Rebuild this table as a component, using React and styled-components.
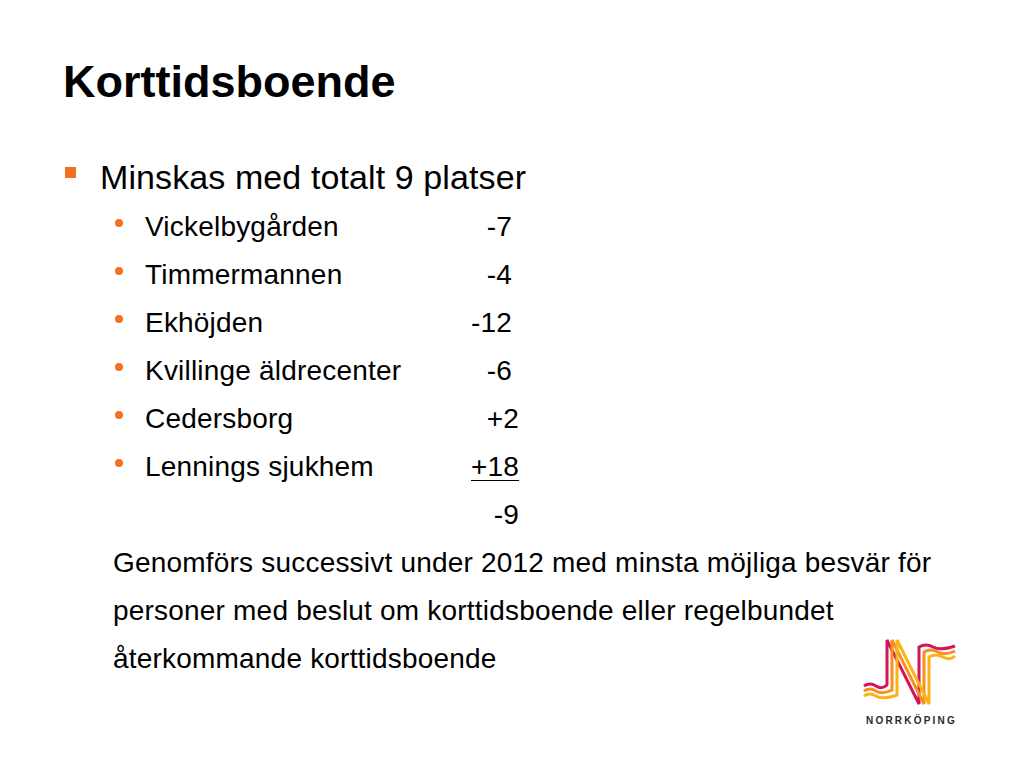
import styled, { createGlobalStyle } from "styled-components";

const GlobalStyle = createGlobalStyle`
  html, body {
    margin: 0;
    padding: 0;
    background: #ffffff;
  }
  body {
    font-family: "Liberation Sans", Arial, Helvetica, sans-serif;
    color: #000000;
  }
`;

const ORANGE = "#f36f21";

const Slide = styled.div`
  position: relative;
  width: 1024px;
  height: 768px;
  overflow: hidden;
  background: #ffffff;
  padding: 59px 0 0 63px;
  box-sizing: border-box;
`;

const Title = styled.h1`
  margin: 0;
  font-size: 45px;
  line-height: 45px;
  font-weight: bold;
`;

const Main = styled.div`
  margin-top: 49px;
  display: flex;
  align-items: flex-start;
  font-size: 34px;
  line-height: 48px;
  height: 50px;
  letter-spacing: 0.1px;
`;

const Square = styled.span`
  width: 11px;
  height: 11px;
  margin-top: 14px;
  margin-left: 2px;
  margin-right: 24px;
  background: ${ORANGE};
  flex: none;
`;

const List = styled.div`
  display: flex;
  flex-direction: column;
  padding-left: 52px;
`;

const Row = styled.div`
  display: grid;
  grid-template-columns: 30px 326px 48px;
  font-size: 28px;
  line-height: 48px;
  height: 48px;
  letter-spacing: 0.2px;
`;

const Dot = styled.span`
  width: 8px;
  height: 8px;
  border-radius: 50%;
  background: ${ORANGE};
  margin-top: 16px;
  visibility: ${(p) => (p.$hidden ? "hidden" : "visible")};
`;

const Label = styled.span`
  white-space: nowrap;
`;

const Amount = styled.span`
  text-align: right;
  white-space: nowrap;
  padding-right: ${(p) => (p.$tight ? "7px" : "0")};
  text-decoration: ${(p) => (p.$sum ? "underline" : "none")};
  text-decoration-thickness: 1px;
  text-underline-offset: 4px;
`;

const Note = styled.p`
  margin: 0;
  padding-left: 50px;
  width: 840px;
  font-size: 28px;
  line-height: 48px;
  letter-spacing: 0.2px;
`;

const Logo = styled.div`
  position: absolute;
  left: 860px;
  top: 635px;
  display: flex;
  flex-direction: column;
  align-items: flex-start;
`;

const LogoText = styled.span`
  margin: 9px 0 0 6px;
  font-size: 10px;
  line-height: 10px;
  font-weight: bold;
  letter-spacing: 2.2px;
  color: #2b2b2b;
`;

const rows = [
  { name: "Vickelbygården", value: "-7", tight: true },
  { name: "Timmermannen", value: "-4", tight: true },
  { name: "Ekhöjden", value: "-12", tight: true },
  { name: "Kvillinge äldrecenter", value: "-6", tight: true },
  { name: "Cedersborg", value: "+2" },
  { name: "Lennings sjukhem", value: "+18", sum: true },
];

const strands = ["#d4145a", "#f7901e", "#fcb415"];

function NorrkopingMark() {
  return (
    <svg width="100" height="72" viewBox="0 0 100 72">
      {strands.map((color, i) => {
        const o = i * 5;
        const x1 = 27 + o;
        const x2 = x1 + 32;
        const yl = 51 + o;
        const yr = 12 + o;
        const d = `M4 ${yl} Q10 ${yl - 4} 16 ${yl} T${x1} ${yl - 1} L${x1} 5 L${x2} 69 L${x2} ${yr} Q${x2 + 7} ${yr - 4} ${x2 + 14} ${yr} T95 ${yr - 1}`;
        return (
          <path
            key={color}
            d={d}
            fill="none"
            stroke={color}
            strokeWidth="3"
            strokeLinejoin="miter"
          />
        );
      })}
    </svg>
  );
}

export default function App() {
  return (
    <>
      <GlobalStyle />
      <Slide>
        <Title>Korttidsboende</Title>
        <Main>
          <Square />
          <span>Minskas med totalt 9 platser</span>
        </Main>
        <List>
          {rows.map((r) => (
            <Row key={r.name}>
              <Dot />
              <Label>{r.name}</Label>
              <Amount $tight={r.tight} $sum={r.sum}>
                {r.value}
              </Amount>
            </Row>
          ))}
          <Row>
            <Dot $hidden />
            <Label />
            <Amount>-9</Amount>
          </Row>
        </List>
        <Note>
          Genomförs successivt under 2012 med minsta möjliga besvär för
          personer med beslut om korttidsboende eller regelbundet
          återkommande korttidsboende
        </Note>
        <Logo>
          <NorrkopingMark />
          <LogoText>NORRKÖPING</LogoText>
        </Logo>
      </Slide>
    </>
  );
}
